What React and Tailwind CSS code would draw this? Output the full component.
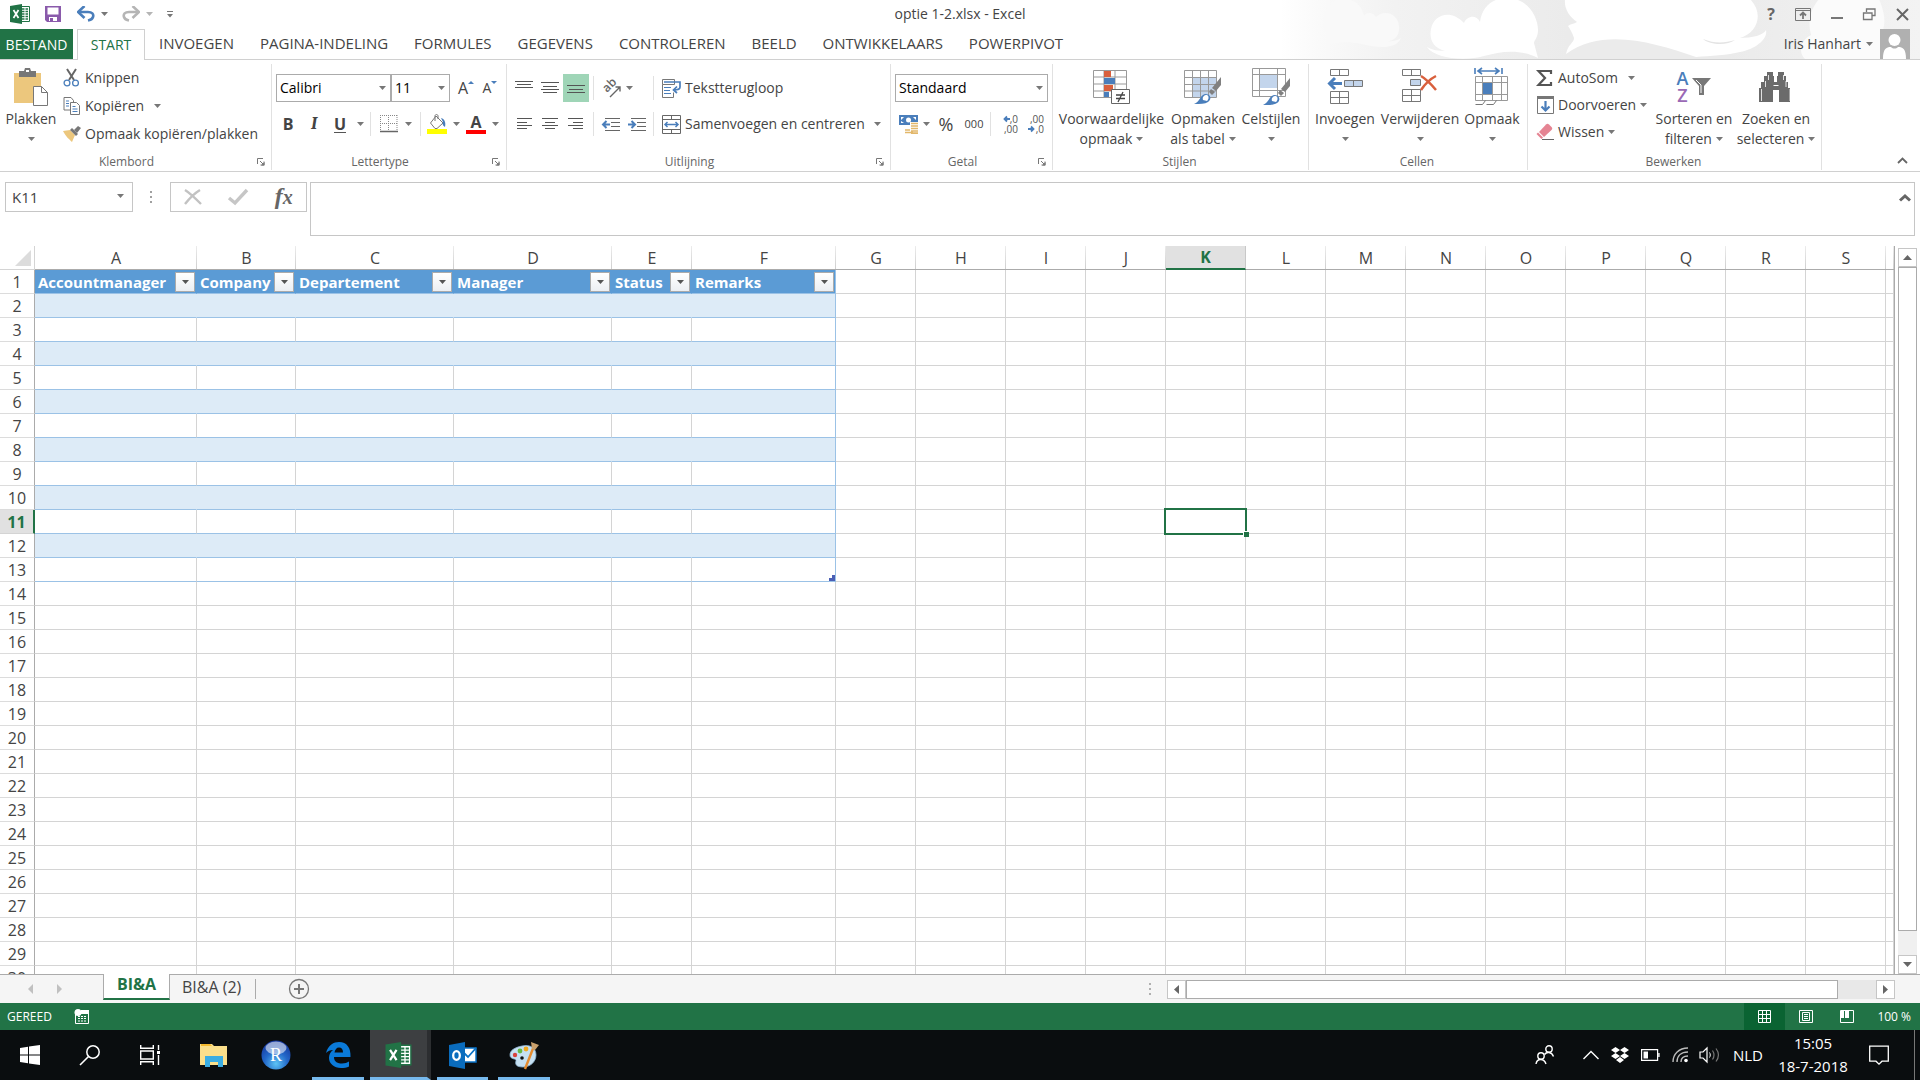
import React from "react";

const Svg = ({ w, h, children, className = "" }) => (
  <svg width={w} height={h} viewBox={`0 0 ${w} ${h}`} fill="none" aria-hidden="true" className={`shrink-0 overflow-visible ${className}`}>
    {children}
  </svg>
);

const Caret = ({ color = "#777", className = "" }) => (
  <Svg w={7} h={4} className={className}>
    <path d="M0 0h7L3.5 4z" fill={color} />
  </Svg>
);

/* ---------- title bar icons ---------- */

const ExcelIcon = ({ w = 20, h = 20 }) => (
  <svg width={w} height={h} viewBox="0 0 20 20" fill="none" aria-hidden="true">
    <path d="M11 2.5h8.5v15H11z" fill="#fff" stroke="#217346" />
    <path d="M12 5h2.5M12 7.5h2.5M12 10h2.5M12 12.5h2.5M12 15h2.5M15.5 5H18M15.5 7.500H18M15.5 10H18M15.5 12.500H18M15.5 15H18" stroke="#217346" strokeWidth="1.4" />
    <path d="M0 2L12 0v20L0 18z" fill="#217346" />
    <path d="M3.500 6l5 8M8.500 6l-5 8" stroke="#fff" strokeWidth="1.700" />
  </svg>
);

const SaveIcon = () => (
  <Svg w={16} h={16}>
    <path d="M0 0h16v16H2l-2-2z" fill="#8a5aab" />
    <path d="M2.500 1.500h11v7h-11z" fill="#fff" />
    <path d="M4 11h8v4H4z" fill="#fff" />
    <path d="M5 12h3v3H5z" fill="#8a5aab" />
  </Svg>
);

const UndoIcon = ({ color, flip }) => (
  <svg width="18" height="16" viewBox="0 0 18 16" fill="none" aria-hidden="true" className={flip ? "-scale-x-100" : ""}>
    <path d="M2 6h9c4 0 6 2 5 5s-3 3-5 3.500" stroke={color} strokeWidth="2.600" />
    <path d="M7.500 0L1 6l6.500 6" stroke={color} strokeWidth="2.600" />
  </svg>
);

const Clouds = () => (
  <svg width="640" height="59" viewBox="0 0 640 59" fill="none" aria-hidden="true" className="pointer-events-none absolute right-0 top-0">
    <defs>
      <linearGradient id="haze" x1="0" x2="1" y1="0" y2="0">
        <stop offset="0" stopColor="#fff" />
        <stop offset="0.060" stopColor="#fafafa" />
        <stop offset="0.180" stopColor="#f2f2f2" />
        <stop offset="0.450" stopColor="#ebebeb" />
        <stop offset="0.700" stopColor="#ebebeb" />
        <stop offset="1" stopColor="#f3f3f3" />
      </linearGradient>
    </defs>
    <path d="M0 0h640v59H0z" fill="url(#haze)" />
    <path d="M45 46c5-4 4-8 0-14-6-16 3-33 18-33 12 0 19 7 21 17 2-4 9-4 12 1 8-8 22-4 23 9 1 10-5 15-12 15 6 1 11-1 14-3-4 10-18 10-30 8-18-4-30-6-46 0z" fill="#f9f9f9" />
    <path d="M147 47c5 3 12 4 18 4-12-3-16-12-14-22 3-15 20-20 33-6 3-7 12-9 16-1 2-16 13-24 27-24 20 0 31 18 31 32 0 8-4 10-4 13l4 15c-20-10-38-6-54-2-20 6-50 2-57-9z" fill="#fff" />
    <path d="M285-1h185c14 14 8 34-10 39 12 0 24-3 26-8 2 9-10 19-26 22-12 3-30 4-44 5-42-14-92-30-130-3 2-10 8-11 8-16-2-6-4-9-6-12 2-2 6-2 9-4-8-6-13-13-12-23z" fill="#fff" />
    <path d="M423 39c12 5 22 4 32 1-8 6-25 5-32-1z" fill="#e4e4e4" />
    <path d="M525 59c-8-8-3-20 6-24-3-12-2-24 8-36h60c8 18 6 30 1 37 10 2 14 12 10 23z" fill="#fbfbfb" />
  </svg>
);

/* ---------- ribbon icons ---------- */

const PasteIcon = () => (
  <Svg w={36} h={38}>
    <path d="M1 5h27v30H1z" fill="#ecc77d" />
    <path d="M6 3h5l1-3h5l1 3h5v6H6z" fill="#777" />
    <path d="M13 2h3v2h-3z" fill="#fff" />
    <path d="M20.500 18.500h8l6 6v13h-14z" fill="#fff" stroke="#777" />
    <path d="M28.500 18.500v6h6" stroke="#777" />
  </Svg>
);
const CutIcon = () => (
  <Svg w={18} h={18}>
    <path d="M4 0l7 11M13 0L6 11" stroke="#666" strokeWidth="2" />
    <circle cx="4" cy="14" r="2.900" stroke="#4a7ebb" strokeWidth="1.300" />
    <circle cx="12.500" cy="14" r="2.900" stroke="#4a7ebb" strokeWidth="1.300" />
  </Svg>
);
const CopyIcon = () => (
  <Svg w={18} h={18}>
    <path d="M1 .5h7l2.500 3v9.500H1z" fill="#fff" stroke="#777" />
    <path d="M7.500 5.500h6l3 3v9h-9z" fill="#fff" stroke="#777" />
    <path d="M3 4h3M3 6.500h3M3 9h3M9.500 9.500h3M9.500 12h5M9.500 14.500h5" stroke="#4a7ebb" />
  </Svg>
);
const PainterIcon = () => (
  <Svg w={18} h={16}>
    <path d="M0 5l7-1 5 5-3 7C6 13 3 11 0 5z" fill="#ecc77d" />
    <path d="M7 4l2-2 6 6-2 2z" fill="#777" />
    <path d="M11 4l4-4 3 2-4 5z" fill="#777" />
  </Svg>
);
const BorderIcon = () => (
  <Svg w={18} h={18}>
    <path d="M.5 0v16M8.500 0v16M17 0v16M0 .5h17M0 8.500h17" stroke="#888" strokeDasharray="1 1" />
    <path d="M0 16.500h18" stroke="#666" strokeWidth="1.500" />
  </Svg>
);
const FillIcon = () => (
  <Svg w={20} h={20}>
    <path d="M9 2l7 7-6 5.500H8L3.500 9z" fill="#fff" stroke="#777" />
    <path d="M8 7V2c0-2 3-2 3 0v3" stroke="#777" />
    <path d="M14 4c4 1 5 5 4 9-2-1-3-3-2-5z" fill="#4a7ebb" />
    <path d="M0 15h20v5H0z" fill="#ff0" />
  </Svg>
);
const AlignIcon = ({ lines, h = 14 }) => (
  <Svg w={18} h={h}>
    {lines.map(([x1, x2, y]) => (
      <path key={y} d={`M${x1} ${y}.5H${x2}`} stroke="#555" />
    ))}
  </Svg>
);
const OrientIcon = () => (
  <Svg w={20} h={18}>
    <text x="0" y="0" transform="translate(5 14) rotate(-45)" fontSize="12" fontWeight="600" fill="#666" fontFamily="Open Sans, sans-serif">ab</text>
    <path d="M8 18L18 8M13.500 8H18v4.500" stroke="#666" strokeWidth="1.400" />
  </Svg>
);
const IndentIcon = ({ out }) => (
  <Svg w={18} h={13}>
    <path d="M3 .5h15M9 4.500h9M9 8.500h9M3 12.500h15" stroke="#666" />
    {out ? (
      <path d="M8 6.500H2M4.500 3L1 6.500 4.500 10" stroke="#4a7ebb" strokeWidth="2" />
    ) : (
      <path d="M0 6.500h6M3.500 3L7 6.500 3.500 10" stroke="#4a7ebb" strokeWidth="2" />
    )}
  </Svg>
);
const WrapIcon = () => (
  <Svg w={20} h={19}>
    <path d="M.5 5.500V.5h12v5zM.5 5.500v13h11v-5" stroke="#777" />
    <path d="M2 3h16v5c0 2-2 3-6 3M15 7.500L11.500 11l3.500 3" stroke="#4a7ebb" strokeWidth="1.700" />
    <path d="M2 8.500h7M2 11.500h6M2 14.500h7" stroke="#4a7ebb" />
  </Svg>
);
const MergeIcon = () => (
  <Svg w={20} h={19}>
    <path d="M.5.500h18v18H.5zM.5 4.500h18M.5 14.500h18M9.500.500v4M9.500 14.500v4" stroke="#666" />
    <path d="M3 9.500h13M5.500 7L3 9.500 5.500 12M13.500 7L16 9.500 13.500 12" stroke="#4a7ebb" strokeWidth="1.500" />
  </Svg>
);
const MoneyIcon = () => (
  <Svg w={20} h={20}>
    <path d="M0 1h19v10H0z" fill="#4a7ebb" />
    <path d="M2 3h3L2 6zM17 3h-3l3 3zM2 9h3L2 7z" fill="#fff" />
    <circle cx="9.500" cy="6" r="2.500" fill="#fff" />
    <path d="M11 8h8v12H6v-5h5z" fill="#fff" />
    <path d="M12 9.500h7M12 12h7M12 14.500h7M12 17h7M6 16h5M6 18.500h8M12 19.200h7" stroke="#e2b76a" strokeWidth="1.700" />
  </Svg>
);
const DecimalIcon = ({ more }) => (
  <span className="flex w-[18px] flex-col text-[10px] leading-[10px] text-[#555]">
    {more ? (
      <>
        <span className="flex items-center justify-end">
          <Svg w={7} h={6}><path d="M7 3H2M4 .5L1.500 3 4 5.500" stroke="#4a7ebb" strokeWidth="1.800" /></Svg>,0
        </span>
        <span className="text-right">,00</span>
      </>
    ) : (
      <>
        <span className="text-right">,00</span>
        <span className="flex items-center justify-end gap-px">
          <Svg w={7} h={6}><path d="M0 3h5M3 .5L5.500 3 3 5.500" stroke="#4a7ebb" strokeWidth="1.800" /></Svg>,0
        </span>
      </>
    )}
  </span>
);
const CondIcon = () => (
  <Svg w={38} h={36}>
    <path d="M.5 1.500h33v27H.5zM.5 8h33M.5 15h33M.5 22h33M11 1.500v27M22 1.500v27" fill="#fff" stroke="#999" />
    <path d="M11 2h7v6h-7zM11 16h9v6h-9z" fill="#d9603d" />
    <path d="M11 9h11v6H11zM11 23h5v5h-5z" fill="#4a7ebb" />
    <path d="M18.500 20.500h18v14h-18z" fill="#fff" stroke="#666" />
    <path d="M23 26h9M23 29.500h9M30 23l-5 10" stroke="#444" strokeWidth="1.300" />
  </Svg>
);
const Brush = () => (
  <>
    <path d="M37 8v8l-5 6-4-3z" fill="#808080" />
    <path d="M27 20l4 3-3 3-3-3z" fill="#808080" />
    <path d="M10 35c6-2 6-9 11-10 6 0 7 5 3 8-3 2-8 2-14 2z" fill="#4a7ebb" />
    <path d="M19 31c-1-3 1-5 4-5 2 1 2 4 0 6z" fill="#fff" />
  </>
);
const FormatTableIcon = () => (
  <Svg w={38} h={36}>
    <path d="M.5 1.500h32v27H.5z" fill="#fff" />
    <path d="M9 9h24v19H9z" fill="#c3d5ec" />
    <path d="M.5 1.500h32v27H.5zM.5 8.500h32M.5 15.500h32M.5 22h32M8.500 1.500v27M16.500 1.500v27M24.500 1.500v27" stroke="#999" />
    <Brush />
  </Svg>
);
const CellStyleIcon = () => (
  <Svg w={38} h={38}>
    <path d="M.5.500h33v28H.5zM.5 6.500h33M.5 22.500h33M7.500.500v28M25.500.500v28" fill="#fff" stroke="#999" />
    <path d="M8 7h17v13H8z" fill="#c3d5ec" />
    <g transform="translate(1 2)"><Brush /></g>
  </Svg>
);
const InsertIcon = () => (
  <Svg w={36} h={36}>
    <path d="M3.500.500h18v6h-18zM12.500.500v6M3.500 22.500h18v12h-18zM3.500 28.500h18M12.500 22.500v12" stroke="#777" />
    <path d="M17.500 11.500h18v6h-18zM26.500 11.500v6" fill="#c3d5ec" stroke="#777" />
    <path d="M15 14.500H3M8 9l-5.500 5.500L8 20" stroke="#4a7ebb" strokeWidth="3" />
  </Svg>
);
const DeleteIcon = () => (
  <Svg w={36} h={36}>
    <path d="M.5.500h18v6H.5zM9.500.500v6M.5 20.500h18v12H.5zM.5 26.500h18M9.500 20.500v12" stroke="#777" />
    <path d="M8.500 10.500h10v6h-10z" fill="#c3d5ec" stroke="#777" />
    <path d="M19 7c5 3 10 8 15 14M34 7c-6 3-11 8-15 14" stroke="#d9603d" strokeWidth="2.500" />
  </Svg>
);
const FormatIcon = () => (
  <Svg w={36} h={38}>
    <path d="M1 0v6M28 0v6M4 3h21M8 0L4 3l4 3M21 0l4 3-4 3" stroke="#4a7ebb" strokeWidth="1.600" />
    <path d="M1.500 8.500h32v24h-32zM1.500 14.500h32M1.500 26.500h32M8.500 8.500v24M18.500 8.500v24M27.500 8.500v24" stroke="#999" />
    <path d="M9 15h9v11H9z" fill="#4a7ebb" />
    <path d="M1.500 36.500h7l3-4M12.500 36.500h7l3-4" stroke="#777" />
  </Svg>
);
const SumIcon = () => (
  <Svg w={16} h={16}>
    <path d="M14 4V1H1.500L8 8l-6.500 7H14v-3" stroke="#555" strokeWidth="2.200" />
  </Svg>
);
const FillDownIcon = () => (
  <Svg w={17} h={18}>
    <path d="M.5.500h16v17H.5z" fill="#fff" stroke="#777" />
    <path d="M0 0h17v3H0z" fill="#777" />
    <path d="M8.500 5v9M4.500 10.500l4 4 4-4" stroke="#4a7ebb" strokeWidth="2.200" />
  </Svg>
);
const EraserIcon = () => (
  <Svg w={18} h={17}>
    <path d="M10 1.500c1-1 2-1 3 0l2.500 2.500c1 1 1 2 0 3L8 14l-5-5z" fill="#e58493" />
    <path d="M2 9.500l5 5L5.500 16 .500 11z" fill="#e58493" />
    <path d="M6 16.500h12" stroke="#666" />
  </Svg>
);
const SortIcon = () => (
  <span className="flex items-center gap-1">
    <span className="flex flex-col items-center text-lg font-semibold leading-[17px]">
      <span className="text-[#4a7ebb]">A</span>
      <span className="text-[#9a69b5]">Z</span>
    </span>
    <Svg w={19} h={18}>
      <path d="M0 0h19l-7 8v9H7V8z" fill="#777" />
      <path d="M4 2l5 5v8" stroke="#fff" />
    </Svg>
  </span>
);
const FindIcon = () => (
  <Svg w={36} h={32}>
    <path d="M9 1h6v4h1v6h3V5h1V1h6v4h2v6h2v6h2v14H21V19h-6v12H1V17h2v-6h3V5h3z" fill="#6b6b6b" />
    <path d="M15.500 14.500h5" stroke="#fff" />
    <path d="M3.500 18v12M7.500 10v6M10.500 4v5M32 18v12M28 10v6M25.500 4v5" stroke="#fff" strokeWidth="0.800" />
  </Svg>
);
const Launcher = ({ label }) => (
  <button aria-label={label} className="flex h-4 w-4 items-center justify-center">
    <Svg w={8} h={8}>
      <path d="M.5 6V.5H6M3 3l3.500 3.500M7 3.500V7H3.500" stroke="#777" />
      <path d="M7.500 4v3.500H4z" fill="#777" />
    </Svg>
  </button>
);

/* ---------- ribbon parts ---------- */

const Divider = ({ className = "" }) => <span className={`h-6 w-px shrink-0 bg-[#e1e1e1] ${className}`} />;

const Group = ({ label, launcher, width, children }) => (
  <section aria-label={label} className={`flex shrink-0 flex-col border-r border-[#e1e1e1] ${width}`}>
    <div className="flex flex-1">{children}</div>
    <div className="flex h-4 items-center pr-0.5">
      <span className="flex-1 text-center text-xs text-[#666]">{label}</span>
      {launcher && <Launcher label={`${label} instellingen`} />}
    </div>
  </section>
);

const BigButton = ({ icon, lines, width }) => (
  <button className={`flex shrink-0 flex-col items-center ${width}`}>
    <span className="flex h-[45px] items-center">{icon}</span>
    <span className="whitespace-nowrap text-sm leading-5">{lines[0]}</span>
    <span className="flex h-5 items-center gap-1 whitespace-nowrap text-sm leading-5">
      {lines[1]}
      <Caret />
    </span>
  </button>
);

const RowButton = ({ icon, label, caret, gap = "gap-1", height = "h-7" }) => (
  <button className={`flex items-center gap-[3px] whitespace-nowrap ${height}`}>
    <span className="flex w-5 justify-center">{icon}</span>
    <span className={`flex items-center ${gap}`}>
      {label}
      {caret && <Caret />}
    </span>
  </button>
);

const Tool = ({ label, width = "w-6", active, children }) => (
  <button aria-label={label} className={`flex h-7 shrink-0 items-center justify-center ${width} ${active ? "bg-[#9fd5b7]" : ""}`}>
    {children}
  </button>
);

const Picker = ({ label, value, width }) => (
  <div className={`relative h-7 shrink-0 ${width}`}>
    <select aria-label={label} defaultValue={value} className="h-full w-full appearance-none border border-[#ababab] bg-white pl-[3px] text-sm text-black">
      <option>{value}</option>
    </select>
    <Caret className="pointer-events-none absolute right-[5px] top-3" />
  </div>
);

const tabs = ["INVOEGEN", "PAGINA-INDELING", "FORMULES", "GEGEVENS", "CONTROLEREN", "BEELD", "ONTWIKKELAARS", "POWERPIVOT"];

const Header = () => (
  <header className="relative border-b border-[#d0d0d0] bg-white">
    <Clouds />
    <div className="relative grid h-7 grid-cols-[1fr_auto_1fr] items-center">
      <div className="flex items-center pl-2.5">
        <ExcelIcon />
        <button aria-label="Opslaan" className="ml-[15px]"><SaveIcon /></button>
        <button aria-label="Ongedaan maken" className="ml-4 flex items-center gap-1.5"><UndoIcon color="#4a7ebb" /><Caret /></button>
        <button aria-label="Opnieuw" className="ml-3.5 flex items-center gap-1.5"><UndoIcon color="#b5b5b5" flip /><Caret color="#b5b5b5" /></button>
        <button aria-label="Werkbalk aanpassen" className="ml-3.5">
          <Svg w={6} h={7}><path d="M0 .5h6" stroke="#777" /><path d="M0 3h6L3 6.500z" fill="#777" /></Svg>
        </button>
      </div>
      <h1 className="text-sm">optie 1-2.xlsx - Excel</h1>
      <div className="flex items-center justify-end gap-5 pr-[11px] text-[#666]">
        <button aria-label="Help" className="text-base font-bold leading-4">?</button>
        <button aria-label="Lintweergave">
          <Svg w={16} h={13}><path d="M.5.500h15v12H.5zM.5 2.500h15" stroke="#777" /><path d="M8 11V5M5 7.500L8 4.500l3 3" stroke="#777" strokeWidth="1.800" /></Svg>
        </button>
        <button aria-label="Minimaliseren"><Svg w={12} h={13}><path d="M0 10h12" stroke="#777" strokeWidth="2" /></Svg></button>
        <button aria-label="Herstellen"><Svg w={13} h={13}><path d="M3.500 4V1H12v6.500H9.500M.5 5H9v6.500H.5z" stroke="#777" strokeWidth="1.300" /></Svg></button>
        <button aria-label="Sluiten"><Svg w={13} h={13}><path d="M1 1l11 11M12 1L1 12" stroke="#666" strokeWidth="2" /></Svg></button>
      </div>
    </div>
    <nav className="relative -mb-px flex h-8 items-stretch text-sm">
      <button className="w-[73px] self-center bg-[#217346] pb-1 pt-1.5 text-white">BESTAND</button>
      <button className="ml-1 mt-px w-[68px] border border-b-0 border-[#d0d0d0] bg-white text-[#217346]">START</button>
      <div className="flex items-center gap-[26px] pl-3.5 text-[15px]">
        {tabs.map((t) => (
          <button key={t}>{t}</button>
        ))}
      </div>
      <div className="ml-auto flex items-center gap-[7px] pr-2.5">
        <button className="flex items-center gap-[5px]">Iris Hanhart<Caret /></button>
        <Svg w={30} h={30}>
          <path d="M0 0h30v30H0z" fill="#b0b0b0" />
          <circle cx="14.500" cy="11" r="6" fill="#fff" />
          <path d="M3 30c0-10 3-12 8-12 2 2 5 2 7 0 5 0 8 2 8 12z" fill="#fff" />
        </Svg>
      </div>
    </nav>
  </header>
);

const Ribbon = () => (
  <div className="flex h-28 border-b border-[#d0d0d0] bg-white pb-px pt-1 text-sm">
    <Group label="Klembord" launcher width="w-[272px]">
      <BigButton icon={<PasteIcon />} lines={["Plakken", ""]} width="w-[62px]" />
      <div className="flex flex-col">
        <RowButton icon={<CutIcon />} label="Knippen" />
        <RowButton icon={<CopyIcon />} label="Kopiëren" caret gap="gap-2.5" />
        <RowButton icon={<PainterIcon />} label="Opmaak kopiëren/plakken" />
      </div>
    </Group>

    <Group label="Lettertype" launcher width="w-[235px]">
      <div className="flex flex-col gap-2 pl-1 pt-2.5">
        <div className="flex items-center">
          <Picker label="Lettertype" value="Calibri" width="w-[115px]" />
          <Picker label="Tekengrootte" value="11" width="w-[59px]" />
          <Tool label="Tekengrootte vergroten" width="w-7">
            <span className="pl-1 text-base">A</span><Svg w={6} h={16}><path d="M0 4h6L3 1z" fill="#4a7ebb" /></Svg>
          </Tool>
          <Tool label="Tekengrootte verkleinen" width="w-6">
            <span className="text-sm">A</span><Svg w={6} h={16}><path d="M0 1h6L3 4z" fill="#4a7ebb" /></Svg>
          </Tool>
        </div>
        <div className="flex items-center">
          <Tool label="Vet"><b className="text-base">B</b></Tool>
          <Tool label="Cursief" width="w-7"><i className="font-serif text-lg font-bold">I</i></Tool>
          <Tool label="Onderstrepen"><b className="border-b border-[#555] text-base leading-4">U</b></Tool>
          <Tool label="Onderstrepingsstijl" width="w-4"><Caret /></Tool>
          <Divider className="mx-0.5" />
          <Tool label="Randen" width="w-8"><BorderIcon /></Tool>
          <Caret />
          <Divider className="ml-2" />
          <Tool label="Opvulkleur" width="w-8"><FillIcon /></Tool>
          <Caret />
          <Tool label="Tekstkleur" width="w-8">
            <span className="flex w-5 flex-col items-center border-b-4 border-[#f00] text-base font-bold leading-4">A</span>
          </Tool>
          <Caret />
        </div>
      </div>
    </Group>

    <Group label="Uitlijning" launcher width="w-[384px]">
      <div className="flex flex-col gap-2 pl-1 pt-2.5">
        <div className="flex items-center">
          <Tool label="Boven uitlijnen" width="w-[26px]"><AlignIcon lines={[[0, 18, 0], [2, 16, 3], [0, 18, 6]]} /></Tool>
          <Tool label="Centreren" width="w-[26px]"><AlignIcon lines={[[0, 18, 1], [2, 16, 5], [0, 18, 8], [2, 16, 11]]} /></Tool>
          <Tool label="Onder uitlijnen" width="w-[26px]" active><AlignIcon lines={[[0, 18, 4], [2, 16, 8], [0, 18, 11]]} /></Tool>
          <Divider className="mx-1" />
          <Tool label="Afdrukstand" width="w-7"><OrientIcon /></Tool>
          <Caret />
          <Divider className="ml-5 mr-2" />
          <button className="flex items-center gap-[3px] whitespace-nowrap"><WrapIcon />Tekstterugloop</button>
        </div>
        <div className="flex items-center">
          <Tool label="Links uitlijnen" width="w-[26px]"><AlignIcon lines={[[2, 17, 1], [2, 12, 5], [2, 17, 8], [2, 12, 11]]} /></Tool>
          <Tool label="Midden uitlijnen" width="w-[26px]"><AlignIcon lines={[[1, 17, 1], [4, 14, 5], [1, 17, 8], [4, 14, 11]]} /></Tool>
          <Tool label="Rechts uitlijnen" width="w-[26px]"><AlignIcon lines={[[1, 16, 1], [6, 16, 5], [1, 16, 8], [6, 16, 11]]} /></Tool>
          <Divider className="mx-1" />
          <Tool label="Inspringing verkleinen" width="w-[26px]"><IndentIcon out /></Tool>
          <Tool label="Inspringing vergroten" width="w-[26px]"><IndentIcon /></Tool>
          <Divider className="ml-[3px] mr-2" />
          <button className="flex items-center gap-[3px] whitespace-nowrap"><MergeIcon />Samenvoegen en centreren<Caret className="ml-1.5" /></button>
        </div>
      </div>
    </Group>

    <Group label="Getal" launcher width="w-[162px]">
      <div className="flex flex-1 flex-col gap-2 pl-1 pt-2.5">
        <Picker label="Getalnotatie" value="Standaard" width="w-[153px]" />
        <div className="flex items-center">
          <Tool label="Financiële notatie" width="w-7"><MoneyIcon /></Tool>
          <Caret />
          <Tool label="Procent" width="w-8"><span className="text-lg">%</span></Tool>
          <Tool label="Duizendtallen"><span className="text-[11px]">000</span></Tool>
          <Divider className="mx-1" />
          <Tool label="Meer decimalen" width="w-7"><DecimalIcon more /></Tool>
          <Tool label="Minder decimalen" width="w-6"><DecimalIcon /></Tool>
        </div>
      </div>
    </Group>

    <Group label="Stijlen" width="w-[256px]">
      <BigButton icon={<CondIcon />} lines={["Voorwaardelijke", "opmaak"]} width="w-[117px]" />
      <BigButton icon={<FormatTableIcon />} lines={["Opmaken", "als tabel"]} width="w-[66px]" />
      <BigButton icon={<CellStyleIcon />} lines={["Celstijlen", ""]} width="w-[70px]" />
    </Group>

    <Group label="Cellen" width="w-[219px]">
      <BigButton icon={<InsertIcon />} lines={["Invoegen", ""]} width="w-[72px]" />
      <BigButton icon={<DeleteIcon />} lines={["Verwijderen", ""]} width="w-[78px]" />
      <BigButton icon={<FormatIcon />} lines={["Opmaak", ""]} width="w-[66px]" />
    </Group>

    <Group label="Bewerken" width="w-[294px]">
      <div className="flex flex-col pl-[7px]">
        <RowButton icon={<SumIcon />} label="AutoSom" caret gap="gap-2.5" height="h-[27px]" />
        <RowButton icon={<FillDownIcon />} label="Doorvoeren" caret height="h-[27px]" />
        <RowButton icon={<EraserIcon />} label="Wissen" caret height="h-[27px]" />
      </div>
      <div className="ml-auto flex pr-1">
        <BigButton icon={<SortIcon />} lines={["Sorteren en", "filteren"]} width="w-[82px]" />
        <BigButton icon={<FindIcon />} lines={["Zoeken en", "selecteren"]} width="w-[82px]" />
      </div>
    </Group>
    <button aria-label="Lint samenvouwen" className="ml-auto mr-3 self-end pb-1.5">
      <Svg w={11} h={7}><path d="M1 6l4.500-4.500L10 6" stroke="#666" strokeWidth="1.800" /></Svg>
    </button>
  </div>
);

const FormulaBar = () => (
  <div className="flex items-start px-[5px] pb-2.5 pt-2.5">
    <div className="relative h-[30px] w-32">
      <input aria-label="Naamvak" defaultValue="K11" className="h-full w-full border border-[#c6c6c6] bg-white pl-1.5 text-[15px] text-[#444]" />
      <Caret className="pointer-events-none absolute right-[9px] top-3" />
    </div>
    <Svg w={37} h={30}><path d="M17 9h2v2h-2zM17 14h2v2h-2zM17 19h2v2h-2z" fill="#a0a0a0" /></Svg>
    <div className="flex h-[30px] w-[137px] items-center justify-around border border-[#c6c6c6]">
      <button aria-label="Annuleren"><Svg w={18} h={16}><path d="M1 1c5 3 11 9 16 14M16 1C11 4 5 10 1 15" stroke="#c2c2c2" strokeWidth="2.400" /></Svg></button>
      <button aria-label="Invoeren"><Svg w={20} h={16}><path d="M1 9l6 5L19 1" stroke="#c6c6c6" strokeWidth="3.400" /></Svg></button>
      <button aria-label="Functie invoegen" className="font-['Liberation_Serif',serif] text-2xl font-bold italic leading-6 text-[#666]">f<span className="text-xl">x</span></button>
    </div>
    <div className="relative ml-[3px] h-[54px] flex-1">
      <textarea aria-label="Formulebalk" className="h-full w-full resize-none border border-[#c6c6c6] bg-white text-sm" />
      <button aria-label="Formulebalk samenvouwen" className="absolute right-1 top-3">
        <Svg w={12} h={8}><path d="M1 6.500l5-4.500 5 4.500" stroke="#666" strokeWidth="3" /></Svg>
      </button>
    </div>
  </div>
);

/* ---------- worksheet ---------- */

const columns = [
  ["A", "w-[162px]"], ["B", "w-[99px]"], ["C", "w-[158px]"], ["D", "w-[158px]"], ["E", "w-20"], ["F", "w-36"],
  ["G", "w-20"], ["H", "w-[90px]"], ["I", "w-20"], ["J", "w-20"], ["K", "w-20"], ["L", "w-20"], ["M", "w-20"],
  ["N", "w-20"], ["O", "w-20"], ["P", "w-20"], ["Q", "w-20"], ["R", "w-20"], ["S", "w-20"], ["", ""],
];
const fields = ["Accountmanager", "Company", "Departement", "Manager", "Status", "Remarks"];
const rows = Array.from({ length: 30 }, (_, i) => i + 1);

const cellClass = (row, col) => {
  if (col > 5 || row > 13) return "border-[#d4d4d4]";
  const banded = row % 2 === 0;
  if (col === 5) return banded ? "border-[#9bc2e6] bg-[#ddebf7]" : "border-[#9bc2e6]";
  return banded ? "border-b-[#9bc2e6] border-r-[#ddebf7] bg-[#ddebf7]" : "border-b-[#9bc2e6] border-r-[#d4d4d4]";
};

const Cell = ({ row, col }) => {
  if (row === 1 && col < 6)
    return (
      <th scope="col" className={`border-b border-r border-b-[#9bc2e6] bg-[#5b9bd5] p-0 ${col === 5 ? "border-r-[#9bc2e6]" : "border-r-[#5b9bd5]"}`}>
        <div className="flex h-[23px] items-center justify-between pl-[3px] pr-px">
          <span className="text-[15px] font-bold leading-5 text-white">{fields[col]}</span>
          <button aria-label={`${fields[col]} filteren`} className="flex h-5 w-5 shrink-0 items-center justify-center border border-[#ababab] bg-gradient-to-b from-white to-[#eceff3]">
            <Caret color="#555" />
          </button>
        </div>
      </th>
    );
  const selected = row === 11 && col === 10;
  const corner = row === 13 && col === 5;
  return (
    <td className={`h-6 border-b border-r p-0 ${cellClass(row, col)} ${selected || corner ? "relative" : ""}`}>
      {selected && (
        <span className="absolute -bottom-0.5 -left-0.5 -right-0.5 -top-0.5 border-2 border-[#217346]">
          <span className="absolute -bottom-1 -right-1 h-1.5 w-1.5 border-l border-t border-white bg-[#217346]" />
        </span>
      )}
      {corner && (
        <Svg w={6} h={6} className="absolute bottom-0 right-0"><path d="M0 6V3h3V0h3v6z" fill="#4a5fb5" /></Svg>
      )}
    </td>
  );
};

const Sheet = () => (
  <div className="min-w-0 flex-1 overflow-hidden border-r border-[#ababab]">
    <table className="w-full table-fixed border-separate border-spacing-0 text-base leading-5 text-[#444]">
      <colgroup>
        <col className="w-[35px]" />
        {columns.map(([name, w]) => (
          <col key={name} className={w} />
        ))}
      </colgroup>
      <thead>
        <tr>
          <td className="h-6 border-b border-r border-b-[#d4d4d4] border-r-[#d4d4d4] p-0">
            <Svg w={16} h={16} className="ml-[15px]"><path d="M16 0v16H0z" fill="#dcdcdc" /></Svg>
          </td>
          {columns.map(([name]) =>
            name === "K" ? (
              <th key={name} scope="col" className="h-6 border-b-2 border-r border-b-[#217346] border-r-[#c8c8c8] bg-[#e1e1e1] p-0 font-bold text-[#217346]">K</th>
            ) : (
              <th key={name} scope="col" className="h-6 border-b border-b-[#ababab] bg-gradient-to-b from-[#ececec] to-[#cfcfcf] bg-[length:1px_100%] bg-right bg-no-repeat p-0 font-normal">{name}</th>
            )
          )}
        </tr>
      </thead>
      <tbody>
        {rows.map((r) => (
          <tr key={r}>
            {r === 11 ? (
              <th scope="row" className="h-6 border-b border-r-2 border-b-[#d4d4d4] border-r-[#217346] bg-[#e1e1e1] p-0 font-bold text-[#217346]">11</th>
            ) : (
              <th scope="row" className="h-6 border-b border-r border-b-[#dcdcdc] border-r-[#ababab] p-0 font-normal">{r}</th>
            )}
            {columns.map(([name], c) => (
              <Cell key={name} row={r} col={c} />
            ))}
          </tr>
        ))}
      </tbody>
    </table>
  </div>
);

const ScrollButton = ({ label, d }) => (
  <button aria-label={label} className="flex h-[19px] w-[19px] shrink-0 items-center justify-center border border-[#c6c6c6] bg-white">
    <Svg w={9} h={9}><path d={d} fill="#666" /></Svg>
  </button>
);

const VerticalScroll = () => (
  <div className="flex w-[25px] flex-col items-center pt-0.5">
    <ScrollButton label="Omhoog" d="M0 7h9L4.500 2z" />
    <div className="flex w-[19px] flex-1 flex-col bg-[#f0f0f0] pb-6">
      <div className="flex-1 border border-[#ababab] bg-white" />
    </div>
    <ScrollButton label="Omlaag" d="M0 2h9L4.500 7z" />
  </div>
);

const SheetBar = () => (
  <div className="flex h-[29px] border-t border-[#ababab] bg-[#f5f5f5] text-base text-[#444]">
    <div className="flex w-[103px] items-center gap-6 pl-7">
      <button aria-label="Vorig blad"><Svg w={5} h={10}><path d="M5 0v10L0 5z" fill="#c0c0c0" /></Svg></button>
      <button aria-label="Volgend blad"><Svg w={5} h={10}><path d="M0 0v10l5-5z" fill="#c0c0c0" /></Svg></button>
    </div>
    <button className="-mt-px mb-[3px] w-[67px] border-x border-b-2 border-x-[#ababab] border-b-[#217346] bg-white pb-1 font-bold leading-5 text-[#217346]">BI&amp;A</button>
    <button className="my-1 border-r border-[#ababab] pb-3 pl-3 pr-3.5 leading-4">BI&amp;A (2)</button>
    <button aria-label="Nieuw blad" className="ml-8">
      <Svg w={22} h={22}><circle cx="11" cy="11" r="9.500" stroke="#777" strokeWidth="1.300" /><path d="M11 6v10M6 11h10" stroke="#777" strokeWidth="2" /></Svg>
    </button>
    <div className="ml-auto mr-[25px] flex w-[39%] items-center pl-[3px]">
      <Svg w={18} h={14}><path d="M0 1h2v2H0zM0 6h2v2H0zM0 11h2v2H0z" fill="#b0b0b0" /></Svg>
      <ScrollButton label="Naar links" d="M7 0v9L2 4.500z" />
      <div className="flex h-[19px] flex-1 bg-[#e8e8e8] pr-[38px]">
        <div className="flex-1 border border-[#ababab] bg-white" />
      </div>
      <ScrollButton label="Naar rechts" d="M2 0v9l5-4.500z" />
    </div>
  </div>
);

const StatusBar = () => (
  <div className="flex h-[27px] items-center bg-[#217346] pl-[7px] pr-[9px] text-xs text-white">
    <span>GEREED</span>
    <button aria-label="Macro opnemen" className="ml-[22px]">
      <Svg w={16} h={15}>
        <path d="M1.500 4.500h13v10h-13z" stroke="#fff" />
        <path d="M7 1h8v4H7z" fill="#fff" /><circle cx="4" cy="3.500" r="3.500" fill="#fff" />
        <path d="M4 7.500h2M7 7.500h2M10 7.500h2M4 9.500h2M7 9.500h2M10 9.500h2M4 12h2M7 12h2M10 12h2" stroke="#fff" />
      </Svg>
    </button>
    <div className="ml-auto flex h-full items-center">
      <button aria-label="Normaal" className="flex h-full w-[41px] items-center justify-center bg-[#0a6332]">
        <Svg w={13} h={13}><path d="M.5.500h12v12H.5zM.5 4.500h12M.5 8.500h12M4.500.500v12M8.500.500v12" stroke="#fff" /></Svg>
      </button>
      <button aria-label="Pagina-indeling" className="flex w-[41px] justify-center">
        <Svg w={14} h={13}><path d="M.5.500h13v12H.5zM3.500 2.500h7v8h-7zM5 4.500h4M5 6.500h4M5 8.500h4" stroke="#fff" /></Svg>
      </button>
      <button aria-label="Pagina-eindevoorbeeld" className="flex w-[41px] justify-center">
        <Svg w={14} h={13}><path d="M.5.500h13v12H.5z" stroke="#fff" /><path d="M1 1h3v7H1zM5 1h4v7H5z" fill="#fff" /></Svg>
      </button>
      <button className="ml-2.5">100 %</button>
    </div>
  </div>
);

/* ---------- taskbar ---------- */

const TaskButton = ({ label, width, open, active, children }) => (
  <button aria-label={label} className={`flex h-full shrink-0 items-center justify-center ${width} ${active ? "border-r-4 border-r-[#2c2e30] bg-[#3d3f41]" : ""} ${open ? "border-b-[3px] border-b-[#76b9ed] pt-[3px]" : ""}`}>
    {children}
  </button>
);

const Taskbar = () => (
  <footer className="flex h-[50px] items-center bg-[#0a0d0f] text-white">
    <TaskButton label="Start" width="w-[60px]">
      <Svg w={20} h={20}><path d="M0 3l8-1.200v7.700H0zM9 1.600L20 0v9.500H9zM0 10.500h8v7.700L0 17zM9 10.500h11V20L9 18.400z" fill="#fff" /></Svg>
    </TaskButton>
    <TaskButton label="Zoeken" width="w-[60px]">
      <Svg w={20} h={20}><circle cx="13" cy="7" r="6.200" stroke="#fff" strokeWidth="1.500" /><path d="M8.500 11.500L0 20" stroke="#fff" strokeWidth="1.600" /></Svg>
    </TaskButton>
    <TaskButton label="Taakweergave" width="w-[60px]">
      <Svg w={20} h={20}><path d="M.7 0v3.300h12.600V0M.7 20v-3.300h12.600V20M.7 6h12.600v8H.7zM18.500 0v5M18.500 10v10" stroke="#fff" strokeWidth="1.400" /><path d="M17 6h3v3h-3z" fill="#fff" /></Svg>
    </TaskButton>
    <TaskButton label="Verkenner" width="w-[68px]">
      <Svg w={28} h={24}>
        <path d="M0 1h12l2 2h13v19H0z" fill="#fbdf8b" /><path d="M1 1h9l2 2H1z" fill="#f5b92e" />
        <path d="M5 13h18v11h-5v-5h-8v5H5z" fill="#3bade3" />
      </Svg>
    </TaskButton>
    <TaskButton label="RStudio" width="w-[56px]">
      <Svg w={30} h={30}>
        <defs><radialGradient id="ball" cx="0.5" cy="0.8" r="0.8"><stop offset="0" stopColor="#5cc4f5" /><stop offset="0.500" stopColor="#2368c9" /><stop offset="1" stopColor="#14349b" /></radialGradient></defs>
        <circle cx="15" cy="15" r="14.500" fill="url(#ball)" />
        <ellipse cx="15" cy="8" rx="10.500" ry="6.500" fill="#fff" opacity="0.550" />
        <text x="15" y="21" textAnchor="middle" fontSize="18" fontFamily="Liberation Serif, serif" fill="#fff">R</text>
      </Svg>
    </TaskButton>
    <span className="w-2" />
    <TaskButton label="Edge" width="w-[52px]" open>
      <Svg w={26} h={26}>
        <path d="M1 11C3 3 9 0 14 0c8 0 12 6 11.500 15H9c0 5 4 6.500 8 6.500 3 0 5-1 7-2v5c-2 1-5 1.500-8 1.500C9 26 4 21.500 4 16c0-3 1-6 4-8-3 0-5 1-7 3zM9.500 10.500H18C18 7 16.500 5.500 14 5.500s-4 2-4.500 5z" fill="#0a7ad9" />
      </Svg>
    </TaskButton>
    <span className="w-1.5" />
    <TaskButton label="Excel" width="w-[61px]" open active><ExcelIcon w={27} h={26} /></TaskButton>
    <span className="w-1.5" />
    <TaskButton label="Outlook" width="w-[51px]" open>
      <Svg w={28} h={27}>
        <path d="M11 6h16v14H11z" fill="#fff" stroke="#0a72c6" strokeWidth="1.500" />
        <path d="M14 10l5 5 8-9" stroke="#0a72c6" strokeWidth="1.800" />
        <path d="M0 3l16-3v27L0 24z" fill="#0a6cbd" />
        <ellipse cx="7.500" cy="13.500" rx="3.300" ry="4.300" stroke="#fff" strokeWidth="2.300" />
      </Svg>
    </TaskButton>
    <span className="w-2.5" />
    <TaskButton label="Paint" width="w-[52px]" open>
      <Svg w={30} h={29}>
        <path d="M13 5c8-2 14 2 14 9s-6 12-13 12-8-3-7-6-6-1-6-6 5-7.500 12-9z" fill="#c6e0f2" stroke="#8fb6d3" strokeWidth="0.800" />
        <circle cx="6" cy="14" r="2.200" fill="#d9423d" /><circle cx="11" cy="10" r="2.400" fill="#69b944" /><circle cx="17" cy="8" r="2.400" fill="#f1a81f" /><circle cx="13" cy="17" r="1.800" fill="#111" />
        <path d="M25 5L16 28" stroke="#e58b2f" strokeWidth="2.400" /><path d="M22 1l8 3-4 5-3-1z" fill="#c9a06c" />
      </Svg>
    </TaskButton>

    <div className="ml-auto flex h-full items-center">
      <button aria-label="Personen">
        <Svg w={20} h={20}><circle cx="14" cy="4" r="3.200" stroke="#fff" strokeWidth="1.400" /><circle cx="6" cy="11" r="3.200" stroke="#fff" strokeWidth="1.400" /><path d="M9.500 9.500c2-3 7-3 9 2M1 19c1-6 8-6 10 0" stroke="#fff" strokeWidth="1.400" /></Svg>
      </button>
      <button aria-label="Verborgen pictogrammen" className="ml-7"><Svg w={16} h={10}><path d="M.5 9L8 1.500 15.500 9" stroke="#fff" strokeWidth="1.400" /></Svg></button>
      <button aria-label="Dropbox" className="ml-3">
        <Svg w={18} h={16}><path d="M4.500 0L9 3 4.500 6 0 3zM13.500 0L18 3l-4.500 3L9 3zM4.500 6L9 9l-4.500 3L0 9zM13.500 6L18 9l-4.500 3L9 9zM9 10l4 3-4 3-4-3z" fill="#fff" /></Svg>
      </button>
      <button aria-label="Batterij" className="ml-3"><Svg w={19} h={12}><path d="M.6.600h16v10.800H.6zM18 4v4" stroke="#fff" strokeWidth="1.200" /><path d="M2.500 2.500h4.500v7H2.500z" fill="#fff" /></Svg></button>
      <button aria-label="Netwerk" className="ml-3"><Svg w={17} h={16}><path d="M1 15C1 7 7 1 16 1M5 15c0-6 4-10 11-10M9 15c0-4 3-6 7-6" stroke="#bbb" strokeWidth="1.400" /><circle cx="14" cy="13.500" r="1.800" fill="#fff" /></Svg></button>
      <button aria-label="Volume" className="ml-2.5"><Svg w={22} h={16}><path d="M1 5h3l4-4v14l-4-4H1z" stroke="#fff" strokeWidth="1.200" /><path d="M10.500 5.500c1 1.500 1 3.500 0 5" stroke="#fff" /><path d="M13.500 3.500c2 3 2 6 0 9M17 1.500c3 4 3 9 0 13" stroke="#777" strokeWidth="1.200" /></Svg></button>
      <button className="ml-3 text-[15px]">NLD</button>
      <div className="ml-2.5 w-20 text-center text-[15px] leading-[23px]"><div>15:05</div><div>18-7-2018</div></div>
      <button aria-label="Meldingen" className="ml-4"><Svg w={20} h={20}><path d="M.7 1.200h18.600v15H13l-3 3-3-3H.7z" stroke="#fff" strokeWidth="1.300" /></Svg></button>
      <span className="ml-[25px] mr-[5px] h-full w-px bg-[#777]" />
    </div>
  </footer>
);

export default function App() {
  return (
    <div className="flex h-screen flex-col overflow-hidden bg-white font-['Open_Sans','Noto_Sans',sans-serif] text-[#444]">
      <Header />
      <Ribbon />
      <FormulaBar />
      <main className="flex min-h-0 flex-1 overflow-hidden">
        <Sheet />
        <VerticalScroll />
      </main>
      <SheetBar />
      <StatusBar />
      <Taskbar />
    </div>
  );
}
